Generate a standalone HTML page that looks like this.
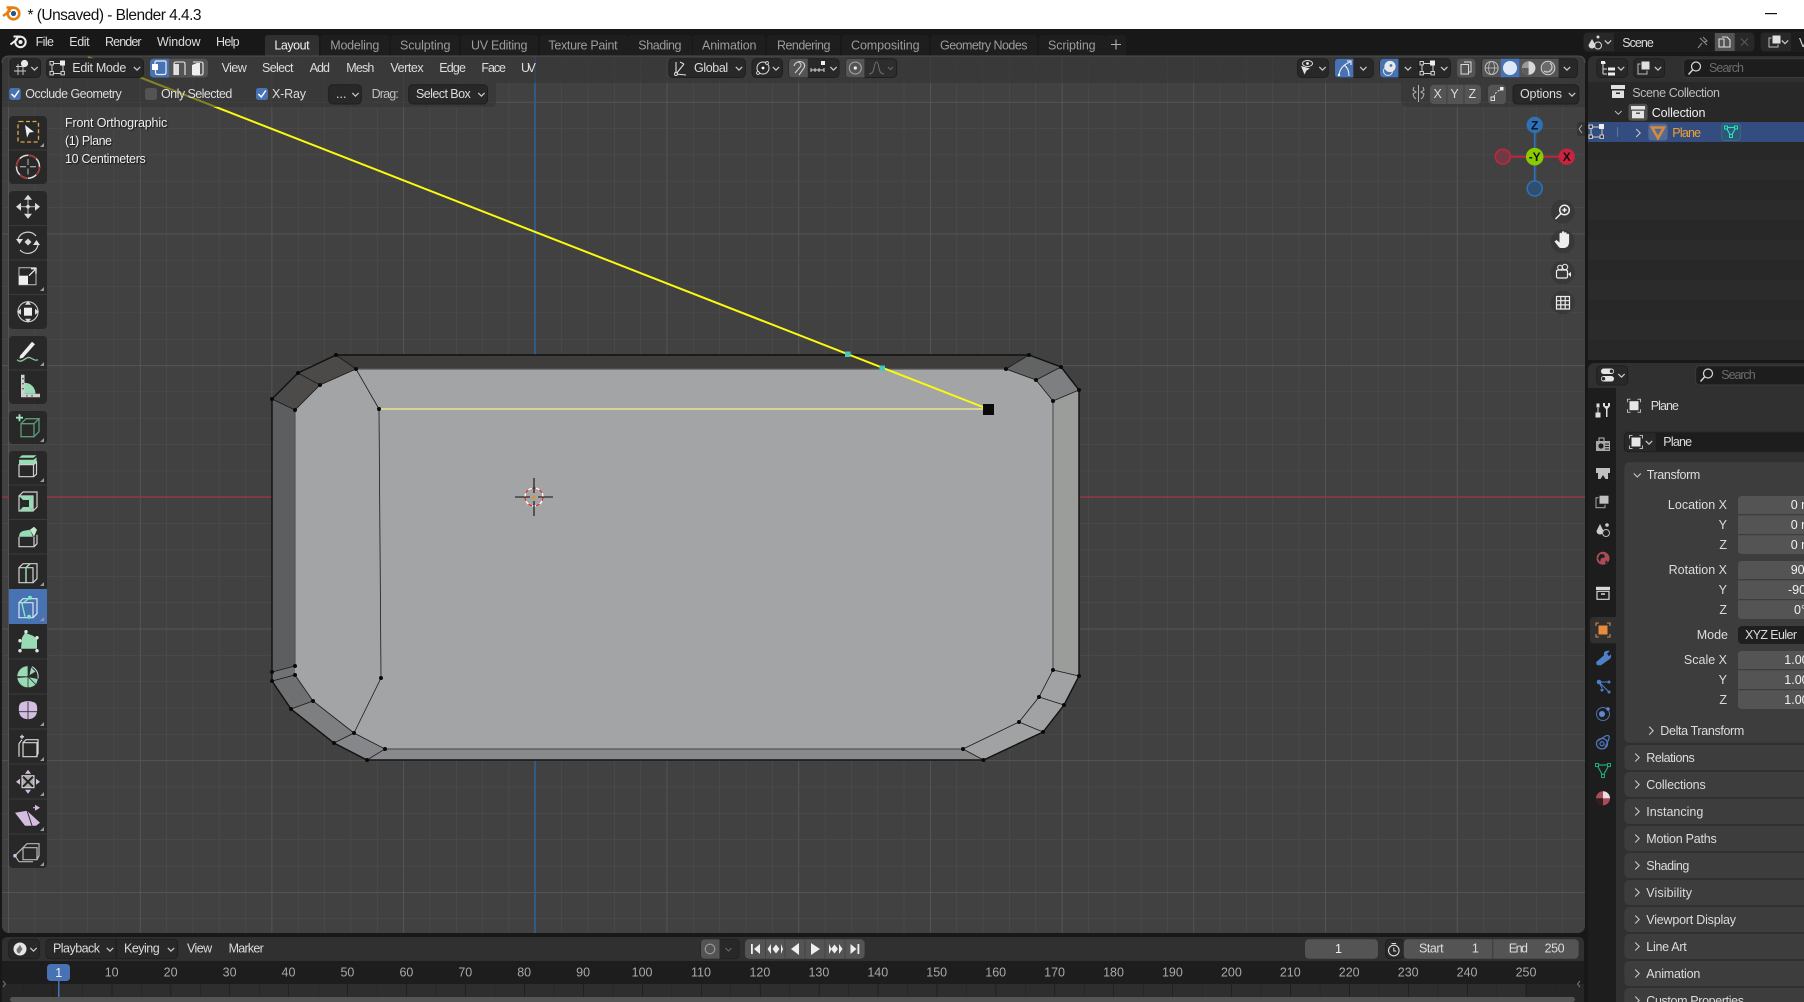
<!DOCTYPE html>
<html><head><meta charset="utf-8"><title>Blender 4.4.3</title>
<style>
html,body{margin:0;padding:0;background:#181818;width:1804px;height:1002px;overflow:hidden}
svg{display:block}
text{font-family:"Liberation Sans",sans-serif;font-size:12.5px;fill:#dcdcdc;white-space:pre}
.t{fill:#9c9c9c}.w{fill:#f0f0f0}.d{fill:#6c6c6c}
.b{fill:#282828;stroke:#1f1f1f}
.e{stroke:#1a1a1a;stroke-width:.8;fill:none}
.mint{fill:#98dbb4}.li{fill:#d3bde0}
</style></head><body>
<svg width="1804" height="1002" viewBox="0 0 1804 1002" xmlns="http://www.w3.org/2000/svg">
<defs>
<pattern id="g1" patternUnits="userSpaceOnUse" x="535" y="497" width="26.34" height="26.34"><path d="M0 0H26.34M0 0V26.34" stroke="#4e4e4e" stroke-width="1" fill="none"/></pattern>
<pattern id="g2" patternUnits="userSpaceOnUse" x="535" y="497" width="131.7" height="131.7"><path d="M0 0H131.7M0 0V131.7" stroke="#5c5c5c" stroke-width="1.2" fill="none"/></pattern>
<path id="cd" d="M-3.2 -1.6L0 1.6L3.2 -1.6" fill="none" stroke="#c8c8c8" stroke-width="1.2"/>
<path id="cr" d="M-1.8 -4L2.2 0L-1.8 4" fill="none" stroke="#c8c8c8" stroke-width="1.1"/>
<clipPath id="vp"><rect x="2" y="56" width="1583" height="877" rx="7"/></clipPath>
<g id="vm"><rect x="-6" y="-5" width="11" height="10" fill="none" stroke="#d0d0d0" stroke-width="1"/><rect x="2" y="-8" width="5" height="5" fill="#eee"/><rect x="-8" y="-7" width="3.4" height="3.4" fill="#282828" stroke="#d0d0d0"/><rect x="-8" y="3" width="3.4" height="3.4" fill="#282828" stroke="#d0d0d0"/><rect x="3" y="3" width="3.4" height="3.4" fill="#282828" stroke="#d0d0d0"/></g>
<path id="tri" d="M0 0L4 -4V0Z" fill="#9a9a9a"/>
</defs>

<!-- window -->
<rect width="1804" height="1002" fill="#181818"/>
<rect width="1804" height="29" fill="#fff"/>
<g transform="translate(11.5,13.5)">
<circle cx="2" cy="0" r="5.8" fill="none" stroke="#e87d0d" stroke-width="2.6"/><circle cx="2" cy="0" r="2.6" fill="#265787"/>
<path d="M-8.5 2.5L-1 -3M-5 -6H2" stroke="#e87d0d" stroke-width="2.4" fill="none"/></g>
<text x="27.5" y="20" textLength="174" style="font-size:15.5px;fill:#111">* (Unsaved) - Blender 4.4.3</text>
<rect x="1765" y="13" width="12" height="1.2" fill="#111"/>

<!-- topbar -->
<g transform="translate(18.5,42)">
<circle cx="2" cy="0" r="5.2" fill="none" stroke="#eee" stroke-width="2"/><circle cx="2" cy="0" r="2" fill="#eee"/>
<path d="M-8 2.5L-1 -3M-5 -5.5H2" stroke="#eee" stroke-width="2" fill="none"/></g>
<text x="35.6" y="46" textLength="18.4">File</text>
<text x="69.3" y="46" textLength="20.3">Edit</text>
<text x="105" y="46" textLength="36.6">Render</text>
<text x="157" y="46" textLength="43.5">Window</text>
<text x="216" y="46" textLength="23.6">Help</text>
<g fill="#1e1e1e">
<path d="M320.7 56V38q0-3 3-3h63q3 0 3 3v18zM391 56V38q0-3 3-3h62q3 0 3 3v18zM461 56V38q0-3 3-3h71q3 0 3 3v18zM540 56V38q0-3 3-3h82q3 0 3 3v18zM628 56V38q0-3 3-3h58q3 0 3 3v18zM693 56V38q0-3 3-3h66q3 0 3 3v18zM767 56V38q0-3 3-3h67q3 0 3 3v18zM842 56V38q0-3 3-3h81q3 0 3 3v18zM931 56V38q0-3 3-3h100q3 0 3 3v18zM1039 56V38q0-3 3-3h61q3 0 3 3v18zM1106 56V38q0-3 3-3h14q3 0 3 3v18z"/>
</g>
<path d="M265 56V38q0-3 3-3h48q3 0 3 3v18z" fill="#303030"/>
<text x="274.4" y="49.500" textLength="35.2" class="w">Layout</text>
<text x="330.3" y="49.500" textLength="49" class="t">Modeling</text>
<text x="400" y="49.500" textLength="50.4" class="t">Sculpting</text>
<text x="471" y="49.500" textLength="56.4" class="t">UV Editing</text>
<text x="548.4" y="49.500" textLength="69.2" class="t">Texture Paint</text>
<text x="638.3" y="49.500" textLength="43.2" class="t">Shading</text>
<text x="702" y="49.500" textLength="54.5" class="t">Animation</text>
<text x="777" y="49.500" textLength="53.4" class="t">Rendering</text>
<text x="851" y="49.500" textLength="68.6" class="t">Compositing</text>
<text x="940" y="49.500" textLength="87.5" class="t">Geometry Nodes</text>
<text x="1048" y="49.500" textLength="47.6" class="t">Scripting</text>
<path d="M1111 44.5h10M1116 39.5v10" stroke="#b0b0b0" stroke-width="1.1"/>
<!-- Scene selector -->
<rect x="1583.5" y="32.5" width="171" height="19" rx="4" fill="#282828" stroke="#1f1f1f"/>
<rect x="1614" y="33" width="100" height="18" fill="#1d1d1d"/>
<path d="M1592 39l-3.500 6a3.300 3.300 0 0 0 7 0z" fill="#d8d8d8"/><circle cx="1598" cy="37" r="1.5" fill="#ddd"/><circle cx="1598" cy="45.5" r="3.5" fill="none" stroke="#ddd"/>
<use href="#cd" x="1608" y="42"/>
<text x="1622.2" y="47" textLength="31.6">Scene</text>
<path d="M1698 48l4-5M1700 38l7 7M1703 37l4 4-3 1" fill="none" stroke="#8c8c8c" stroke-width="1.1"/>
<rect x="1715" y="33" width="19.7" height="18" fill="#545454"/>
<path d="M1722 37h5l3 3v7h-6v-2M1719 39h5v8h-5z" fill="none" stroke="#e0e0e0" stroke-width="1.1"/>
<path d="M1741 38.5l7 7M1748 38.5l-7 7" stroke="#5a5a5a" stroke-width="1.1"/>
<rect x="1760.5" y="32.5" width="60" height="19" rx="4" fill="#282828" stroke="#1f1f1f"/>
<rect x="1791" y="33" width="20" height="18" fill="#1d1d1d"/>
<rect x="1769" y="38" width="9" height="9" fill="none" stroke="#bbb"/><rect x="1772" y="35" width="9" height="9" fill="#e0e0e0" stroke="#282828"/>
<use href="#cd" x="1785" y="42"/>
<text x="1799" y="47">V</text>

<!-- viewport -->
<g clip-path="url(#vp)">
<rect x="2" y="56" width="1583" height="877" fill="#414141"/>
<rect x="2" y="56" width="1583" height="877" fill="url(#g1)"/>
<rect x="2" y="56" width="1583" height="877" fill="url(#g2)"/>
<path d="M2 497H1585" stroke="#933543" stroke-width="1.6"/>
<path d="M535 56V933" stroke="#2e5f96" stroke-width="1.6"/>

<!-- mesh faces -->
<polygon points="295,410 320,385 356,369 1006,369 1036,380 1053,401 1053,670 1039,697 1019,722 963,749 385,749 354,733 313,701 295,675 295,666" fill="#a3a4a6"/>
<polygon points="272,399 295,410 295,666 272,672" fill="#5d5e60"/>
<polygon points="336,355 1029,355 1006,369 356,369" fill="#3e3d3b"/>
<polygon points="272,399 298,373 320,385 295,410" fill="#4c4b49"/>
<polygon points="298,373 336,355 356,369 320,385" fill="#4b4a48"/>
<polygon points="1029,355 1061,367 1036,380 1006,369" fill="#626464"/>
<polygon points="1061,367 1079,390 1053,401 1036,380" fill="#7d7f80"/>
<polygon points="1079,390 1079,676 1053,670 1053,401" fill="#9b9d9b"/>
<polygon points="1079,676 1064,705 1039,697 1053,670" fill="#a1a2a3"/>
<polygon points="1064,705 1043,732 1019,722 1039,697" fill="#a1a2a3"/>
<polygon points="1043,732 983.5,760 963,749 1019,722" fill="#a1a2a3"/>
<polygon points="983.5,760 367,760 385,749 963,749" fill="#888a8c"/>
<polygon points="272,672 272,681 295,675 295,666" fill="#707274"/>
<polygon points="272,681 291,709 313,701 295,675" fill="#6f7072"/>
<polygon points="291,709 334,743 354,733 313,701" fill="#7e7f81"/>
<polygon points="334,743 367,760 385,749 354,733" fill="#86878a"/>
<!-- edges -->
<path d="M356 369H1006M385 749H963M295 410V666M1053 401V670" stroke="#555" stroke-width="1.2" fill="none"/>
<path class="e" d="M272 399L295 410L320 385L356 369L379 409M298 373L320 385M336 355L356 369M1029 355L1006 369L1036 380L1053 401M1061 367L1036 380M1079 390L1053 401M1079 676L1053 670L1039 697L1019 722L963 749M1064 705L1039 697M1043 732L1019 722M983.5 760L963 749M272 672L295 666M272 681L295 675L313 701L354 733L385 749M291 709L313 701M334 743L354 733M367 760L385 749M379 409L381 678L354 733"/>
<path d="M272 399L298 373L336 355H1029L1061 367L1079 390V676L1064 705L1043 732L983.5 760H367L334 743L291 709L272 681V399Z" fill="none" stroke="#111" stroke-width="1.4"/>
<path d="M379 409H988" stroke="#f4f490" stroke-width="1.3"/>
<path d="M88 57L988 409" stroke="#fafa10" stroke-width="2"/>
<g fill="#0a0a0a">
<circle cx="272" cy="399" r="2"/><circle cx="298" cy="373" r="2"/><circle cx="336" cy="355" r="2"/><circle cx="295" cy="410" r="2"/><circle cx="320" cy="385" r="2"/><circle cx="356" cy="369" r="2"/><circle cx="1029" cy="355" r="2"/><circle cx="1061" cy="367" r="2"/><circle cx="1079" cy="390" r="2"/><circle cx="1006" cy="369" r="2"/><circle cx="1036" cy="380" r="2"/><circle cx="1053" cy="401" r="2"/><circle cx="1053" cy="670" r="2"/><circle cx="1079" cy="676" r="2"/><circle cx="1039" cy="697" r="2"/><circle cx="1064" cy="705" r="2"/><circle cx="1019" cy="722" r="2"/><circle cx="1043" cy="732" r="2"/><circle cx="963" cy="749" r="2"/><circle cx="983.5" cy="760" r="2"/><circle cx="272" cy="672" r="2"/><circle cx="272" cy="681" r="2"/><circle cx="295" cy="666" r="2"/><circle cx="295" cy="675" r="2"/><circle cx="313" cy="701" r="2"/><circle cx="291" cy="709" r="2"/><circle cx="354" cy="733" r="2"/><circle cx="334" cy="743" r="2"/><circle cx="385" cy="749" r="2"/><circle cx="367" cy="760" r="2"/><circle cx="381" cy="678" r="2"/><circle cx="379" cy="409" r="2"/>
<rect x="983" y="404" width="11" height="11"/>
</g>
<rect x="845" y="351.500" width="5.500" height="5.500" fill="#46c8c0"/>
<rect x="879.500" y="365.500" width="5.500" height="5.500" fill="#46c8c0"/>
<!-- 3D cursor -->
<g transform="translate(534,497)" fill="none">
<circle r="9" stroke="#fff" stroke-width="1.3"/>
<circle r="9" stroke="#d03030" stroke-width="1.3" stroke-dasharray="4 4"/>
<path d="M-19 0H-4M4 0H19M0 -19V-4M0 4V19" stroke="#111" stroke-width="1.1"/>
<circle r="1.8" fill="#e8902c"/>
</g>

<!-- header overlays -->
<rect x="2" y="56" width="1583" height="27" fill="#343434" fill-opacity=".6"/>
<path d="M2 83H496V101q0 6-6 6H2z" fill="#343434" fill-opacity=".6"/>
<path d="M1401 83H1585V107H1407q-6 0-6-6z" fill="#343434" fill-opacity=".6"/>
</g>
<path d="M2 63q0-7 7-7H1578q7 0 7 7" fill="none" stroke="#4e4e4e" stroke-width="1"/>

<!-- header left -->
<rect class="b" x="10" y="58.7" width="30.5" height="18.8" rx="4"/>
<path d="M14 71h12M16 66.5h8M18 64v11M23 64v11" stroke="#ccc" stroke-width=".9"/><circle cx="24.5" cy="63.5" r="3.6" fill="#e8e8e8"/>
<use href="#cd" x="34.5" y="68.5"/>
<rect class="b" x="46.7" y="58.7" width="96.8" height="18.8" rx="4"/>
<use href="#vm" x="58" y="68.5"/>
<text x="72.3" y="72" textLength="54">Edit Mode</text>
<use href="#cd" x="137" y="68.5"/>
<rect x="150" y="58.7" width="58" height="18.8" rx="4" fill="#545454"/>
<path d="M154 58.7h14.8v18.8H154q-4 0-4-4V62.7q0-4 4-4z" fill="#4772b3"/>
<path d="M155 65v-2.5q0-1.5 1.5-1.5h8q1.5 0 1.500 1.500v10q0 2-2 2h-6.500q-2 0-2-2v-3" fill="none" stroke="#eee" stroke-width="1.2"/><rect x="152" y="64" width="6" height="6" fill="#fff"/>
<path d="M174 75v-11q0-2 2-2h7q2 0 2 2v11" fill="none" stroke="#eee" stroke-width="1.1"/><rect x="174" y="64" width="5" height="11" fill="#eee" fill-opacity=".9"/>
<path d="M193 62h8q2 0 2 2v9q0 2-2 2h-8" fill="none" stroke="#eee" stroke-width="1.1"/><path d="M192 65l5-2h3v12h-8z" fill="#f0f0f0"/>
<text x="221.6" y="72" textLength="25.2">View</text>
<text x="262" y="72" textLength="31.5">Select</text>
<text x="309.6" y="72" textLength="20.4">Add</text>
<text x="346.3" y="72" textLength="28">Mesh</text>
<text x="390.4" y="72" textLength="33.2">Vertex</text>
<text x="439.3" y="72" textLength="26.7">Edge</text>
<text x="481.4" y="72" textLength="24.6">Face</text>
<text x="521" y="72" textLength="14.8">UV</text>

<!-- header center -->
<rect class="b" x="668.9" y="58.7" width="76.5" height="18.800" rx="4"/>
<path d="M676 74V62M676 74L686 75M676 74L684 64M680 62L684 64" fill="none" stroke="#ddd" stroke-width="1.1"/><circle cx="676" cy="74" r="1.5" fill="#282828" stroke="#ddd"/>
<text x="694" y="72" textLength="34.2">Global</text>
<use href="#cd" x="739" y="68.5"/>
<rect class="b" x="752" y="58.7" width="30.5" height="18.8" rx="4"/>
<circle cx="763" cy="68" r="6" fill="none" stroke="#ddd" stroke-width="1"/><circle cx="763" cy="68" r="1.4" fill="#fff"/>
<circle cx="767" cy="63" r="1.4" fill="#282828" stroke="#ddd" stroke-width=".9"/><circle cx="758" cy="73" r="1.4" fill="#282828" stroke="#ddd" stroke-width=".9"/>
<use href="#cd" x="776" y="68.5"/>
<rect class="b" x="789" y="58.7" width="50" height="18.8" rx="4"/>
<path d="M793 58.7h14.8v18.8H793q-4 0-4-4V62.7q0-4 4-4z" fill="#545454"/>
<path d="M795 73l6-7a3.5 3.5 0 0 0 -3 -4M794 66a6 6 0 0 1 8 -4q4 2 2 6l-5 7" fill="none" stroke="#cfcfcf" stroke-width="1.1"/>
<path d="M811 70h13M811 68v4M815 68v4M819 68v4M824 68v4" stroke="#ddd" fill="none" stroke-width=".9"/><rect x="821" y="61" width="4" height="4" fill="#eee"/>
<use href="#cd" x="833.5" y="68.5"/>
<rect class="b" x="845.7" y="58.7" width="51" height="18.8" rx="4" fill-opacity=".7"/>
<path d="M849.7 58.7h14.7v18.8H849.7q-4 0-4-4V62.7q0-4 4-4z" fill="#545454"/>
<circle cx="855.3" cy="68" r="6" fill="none" stroke="#aaa"/><circle cx="855.3" cy="68" r="1.6" fill="#eee"/>
<path d="M869 74q4 0 5-6t2.5-6 2.5 6 5 6" fill="none" stroke="#6a6a6a" stroke-width="1.1"/>
<path d="M888 67l2.5 2.5L893 67" fill="none" stroke="#6a6a6a"/>

<!-- header right -->
<rect class="b" x="1297.5" y="58.7" width="30.8" height="18.8" rx="4"/>
<path d="M1301 66l9 2.5-3.5 2-2 4z" fill="#e0e0e0"/><ellipse cx="1307.5" cy="63.5" rx="5" ry="3" fill="none" stroke="#ddd"/><circle cx="1307.5" cy="63.5" r="1.4" fill="#eee"/>
<use href="#cd" x="1322.5" y="68.5"/>
<rect class="b" x="1334.8" y="58.7" width="38.5" height="18.8" rx="4"/>
<path d="M1338.8 58.7h14.5v18.8h-14.5q-4 0-4-4V62.7q0-4 4-4z" fill="#4772b3"/>
<path d="M1339 75q1-9 11-13M1349 76q0-8-5-11" fill="none" stroke="#eee" stroke-width="1.1"/><circle cx="1339" cy="75" r="1.2" fill="#fff"/><path d="M1347 61h4v4" stroke="#fff" fill="none"/>
<use href="#cd" x="1363.3" y="68.5"/>
<rect class="b" x="1380" y="58.7" width="70.4" height="18.8" rx="4"/>
<path d="M1384 58.7h14.4v18.8H1384q-4 0-4-4V62.7q0-4 4-4z" fill="#4772b3"/>
<circle cx="1390" cy="66.5" r="5.6" fill="#e8e8e8"/><circle cx="1388" cy="71" r="4.5" fill="none" stroke="#e8e8e8"/><circle cx="1391" cy="65.5" r="1.4" fill="#4772b3"/>
<use href="#cd" x="1408" y="68.5"/>
<path d="M1418.8 59v18" stroke="#1c1c1c"/>
<g transform="translate(1428,68.5)"><use href="#vm"/></g>
<use href="#cd" x="1444.2" y="68.5"/>
<rect x="1457" y="58.7" width="18.4" height="18.8" rx="4" fill="#545454"/>
<path d="M1464 62h7v10h-2M1461 64.5h7.5v9.5H1461z" fill="none" stroke="#dcdcdc"/><path d="M1463 71h0M1466 68h0" stroke="#ddd" stroke-width="1.5"/>
<rect class="b" x="1482" y="58.7" width="95.5" height="18.8" rx="4"/>
<path d="M1486 58.7h72.6v18.8H1486q-4 0-4-4V62.7q0-4 4-4z" fill="#545454"/>
<rect x="1500.8" y="58.7" width="18.5" height="18.8" fill="#4772b3"/>
<circle cx="1491.6" cy="68" r="6.5" fill="none" stroke="#c0c0c0"/><ellipse cx="1491.6" cy="68" rx="3" ry="6.5" fill="none" stroke="#c0c0c0" stroke-width=".8"/><path d="M1485 68h13" stroke="#c0c0c0" stroke-width=".8"/>
<circle cx="1510" cy="68" r="7" fill="#dfe8f6"/>
<circle cx="1528.6" cy="68" r="6.8" fill="#9a9a9a"/><path d="M1528.6 61.2a6.8 6.8 0 0 1 0 13.6 6.8 6.8 0 0 1 -6.8 -6.8h6.8z" fill="#d8d8d8"/><path d="M1528.6 68V74.8A6.8 6.8 0 0 1 1521.8 68z" fill="#5c5c5c"/>
<circle cx="1548" cy="68" r="6.8" fill="#6a6a6a" stroke="#d0d0d0"/><path d="M1544 71a5 5 0 0 0 6-8" fill="none" stroke="#ccc" stroke-width="1.2"/>
<use href="#cd" x="1567" y="68.5"/>

<!-- tool settings left -->
<rect x="9.2" y="88" width="11.5" height="12" rx="2.5" fill="#4772b3"/>
<path d="M11.5 94l3 3 4.5-6.5" fill="none" stroke="#fff" stroke-width="1.5"/>
<text x="25.3" y="98" textLength="96.4">Occlude Geometry</text>
<rect x="145" y="88" width="12" height="12" rx="2.5" fill="#545454"/>
<text x="161" y="98" textLength="71.3">Only Selected</text>
<rect x="256" y="88" width="12" height="12" rx="2.5" fill="#4772b3"/>
<path d="M258.3 94l3 3 4.5-6.5" fill="none" stroke="#fff" stroke-width="1.5"/>
<text x="272" y="98" textLength="34">X-Ray</text>
<rect class="b" x="328.7" y="84.7" width="32.6" height="19.3" rx="4"/>
<text x="336" y="98">...</text><use href="#cd" x="355.5" y="94.5"/>
<text x="371.6" y="98" textLength="27.2" style="fill:#c0c0c0">Drag:</text>
<rect class="b" x="408.7" y="84.7" width="78.8" height="19.3" rx="4"/>
<text x="416" y="98" textLength="54.7">Select Box</text><use href="#cd" x="481.4" y="94.5"/>

<!-- tool settings right -->
<path d="M1414 87l-1 3 3 2-3 2 1 3 2 2M1423 87l1 3-3 2 3 2-1 3-2 2M1418.5 85v17" fill="none" stroke="#b4b4b4" stroke-width="1"/>
<rect x="1430" y="84.7" width="51" height="19.3" rx="4" fill="#545454"/>
<path d="M1447 85v19M1464 85v19" stroke="#3f3f3f"/>
<text x="1437.7" y="98" text-anchor="middle">X</text><text x="1454.6" y="98" text-anchor="middle">Y</text><text x="1472.3" y="98" text-anchor="middle">Z</text>
<rect x="1488" y="84.7" width="18" height="19.3" rx="4" fill="#545454"/>
<rect x="1500" y="87" width="3.5" height="3.5" fill="#eee"/><rect x="1491" y="97" width="3.5" height="3.5" fill="none" stroke="#ddd"/><path d="M1494 97q1-5 6-7" fill="none" stroke="#ddd" stroke-dasharray="2 1.5"/>
<rect class="b" x="1513" y="84.7" width="65.7" height="19.3" rx="4"/>
<text x="1520" y="98" textLength="42">Options</text><use href="#cd" x="1572" y="94.5"/>

<!-- overlay text -->
<g style="filter:drop-shadow(1px 1px 0.5px #111)">
<text x="65" y="127" textLength="102.2" class="w">Front Orthographic</text>
<text x="65" y="145" textLength="47" class="w">(1) Plane</text>
<text x="65" y="163" textLength="80.8" class="w">10 Centimeters</text>
</g>

<!-- nav gizmo -->
<path d="M1502.8 156.7H1566.7" stroke="#c8233f" stroke-width="1.8"/>
<path d="M1534.7 125V188" stroke="#2c72b8" stroke-width="1.8"/>
<circle cx="1502.8" cy="156.7" r="7.5" fill="#6f3a44" stroke="#c8233f" stroke-width="1.5"/>
<circle cx="1566.7" cy="156.7" r="8.2" fill="#c8233f"/>
<circle cx="1534.7" cy="125" r="8.2" fill="#2c72b8"/>
<circle cx="1534.7" cy="188.5" r="7.5" fill="#304e70" stroke="#2c72b8" stroke-width="1.5"/>
<circle cx="1534.7" cy="156.7" r="8.8" fill="#8acb00"/>
<text x="1566.7" y="161" text-anchor="middle" style="font-size:12px;fill:#111;font-weight:bold">X</text>
<text x="1534.7" y="129.5" text-anchor="middle" style="font-size:12px;fill:#111;font-weight:bold">Z</text>
<text x="1534.7" y="161" text-anchor="middle" style="font-size:12px;fill:#111;font-weight:bold">-Y</text>
<circle cx="1562.8" cy="211.6" r="12" fill="#343434" fill-opacity=".65"/>
<circle cx="1562.8" cy="241.5" r="12" fill="#343434" fill-opacity=".65"/>
<circle cx="1562.8" cy="272.5" r="12" fill="#343434" fill-opacity=".65"/>
<circle cx="1562.8" cy="302.5" r="12" fill="#343434" fill-opacity=".65"/>
<circle cx="1564.5" cy="210" r="4.8" fill="none" stroke="#eee" stroke-width="1.5"/><path d="M1561 213.5l-5.5 5.5M1562.3 210h4.4M1564.5 207.8v4.4" stroke="#eee" stroke-width="1.5"/>
<path d="M1554.500 241.500l2-1.500 3 2.500V234a1.200 1.200 0 0 1 2.400 0v-1.500a1.200 1.200 0 0 1 2.400 0v1a1.200 1.200 0 0 1 2.400 0v1.500a1.200 1.200 0 0 1 2.400 0v6.500q0 6-5 6.500h-3q-2 0-3-2z" fill="#eee"/>
<rect x="1556.5" y="270" width="11" height="8" rx="1.5" fill="none" stroke="#eee" stroke-width="1.2"/><circle cx="1560" cy="267.5" r="2.3" fill="none" stroke="#eee"/><circle cx="1565" cy="267" r="2.7" fill="none" stroke="#eee"/><path d="M1568 274l3-2v5z" fill="#eee"/>
<path d="M1556.5 296.5h13v12.5h-13zM1556.5 300.7h13M1556.5 304.9h13M1560.8 296.5V309M1565.2 296.5V309" fill="none" stroke="#eee" stroke-width="1.2"/>
<path d="M1585 122h-5q-3 0-3 3v8q0 3 3 3h5z" fill="#343434"/>
<path d="M1582 125l-3 4 3 4" fill="none" stroke="#aaa"/>

<!-- toolbar -->
<g fill="#282828">
<rect x="9" y="116" width="38" height="68" rx="4"/>
<rect x="9" y="191" width="38" height="138" rx="4"/>
<rect x="9" y="336" width="38" height="68" rx="4"/>
<rect x="9" y="411" width="38" height="33" rx="4"/>
<rect x="9" y="451" width="38" height="417" rx="4"/>
</g>
<path d="M9 150h38M9 225.5h38M9 260h38M9 294.5h38M9 370h38M9 485h38M9 519.5h38M9 554h38M9 659h38M9 694h38M9 729h38M9 764h38M9 799h38M9 834h38" stroke="#3a3a3a"/>
<rect x="9" y="589" width="38" height="35" fill="#4772b3"/>
<g>
<use href="#tri" x="40" y="147"/><use href="#tri" x="40" y="291"/><use href="#tri" x="40" y="366"/><use href="#tri" x="40" y="442"/><use href="#tri" x="40" y="482"/><use href="#tri" x="40" y="586"/><use href="#tri" x="40" y="621"/><use href="#tri" x="40" y="726"/><use href="#tri" x="40" y="761"/><use href="#tri" x="40" y="796"/><use href="#tri" x="40" y="831"/><use href="#tri" x="40" y="866"/>
</g>
<!-- select box -->
<rect x="18" y="121.5" width="20.5" height="20.5" rx="1.5" fill="none" stroke="#e0a84a" stroke-width="1.3" stroke-dasharray="4 2.5"/>
<path d="M25 125l9 7-4.5.5-2.500 5z" fill="#eee"/>
<!-- cursor -->
<circle cx="28" cy="166.7" r="11.5" fill="none" stroke="#ddd" stroke-width="1.5"/>
<circle cx="28" cy="166.7" r="11.5" fill="none" stroke="#a83232" stroke-width="1.5" stroke-dasharray="9 9"/>
<path d="M20 166.7h6M30 166.7h6M28 159v6M28 168.5v6" stroke="#9a9a9a" stroke-width="1.3"/>
<!-- move -->
<g fill="#dcdcdc" transform="translate(28,206.7)"><path d="M0 -12l4 5h-8zM0 12l4 -5h-8zM-12 0l5 -4v8zM12 0l-5 -4v8z"/><path d="M0 -7v14M-7 0h14" stroke="#aaa" stroke-width="1.2"/><circle r="1.8"/></g>
<!-- rotate -->
<g transform="translate(28,242)"><path d="M-10 -3a10.5 10.5 0 0 1 18 -3M10 3a10.5 10.5 0 0 1 -18 5" fill="none" stroke="#d0d0d0" stroke-width="1.2"/><path d="M-12 -3h7l-3.5 5zM12 3h-7l3.5 -5z" fill="#e0e0e0"/><path d="M0 -3.5L3.5 0L0 3.5L-3.5 0z" fill="#d8d8d8"/></g>
<!-- scale -->
<g transform="translate(28,276.7)"><rect x="-9" y="-9" width="17" height="17" fill="none" stroke="#b0b0b0" stroke-width="1.1"/><rect x="-9" y="-1" width="9" height="9" fill="#f0f0f0"/><path d="M1 -1L7 -7M3 -8h5v5" fill="none" stroke="#e8e8e8" stroke-width="1.3"/></g>
<!-- transform -->
<g transform="translate(28,311.7)"><circle r="10" fill="none" stroke="#c8c8c8" stroke-width="1.2"/><rect x="-4" y="-4" width="8" height="8" fill="#eee"/><path d="M0 -11l3 4h-6zM0 11l3 -4h-6zM-11 0l4 -3v6zM11 0l-4 -3v6z" fill="#dcdcdc"/></g>
<!-- annotate -->
<g transform="translate(28,351.7)"><path d="M-8 4L4 -10l3 2.5L-5 6l-3.5 1z" fill="#eee"/><path d="M-11 8q3 3 7 0t6 -2 4 2 4 0" fill="none" stroke="#89c8a0" stroke-width="1.3"/></g>
<!-- measure -->
<g transform="translate(28,386.7)"><path d="M-7 -12h3.5V7H12v3.5H-7z" fill="#d0d0d0"/><path d="M-3.5 -4a11 11 0 0 1 11 11h-11z" class="mint"/><path d="M-6 -8h2M-6 -3h2M-6 2h2M-1 8v2M4 8v2" stroke="#444"/></g>
<!-- add cube -->
<g transform="translate(28,426.7)"><path d="M-7 -3h13v13h-13zM-7 -3l5 -5h13l-5 5M11 -8v13l-5 5" fill="none" stroke="#5e9a78" stroke-width="1.3"/><path d="M-12 -9h7M-8.5 -12.5v7" stroke="#a4e4bc" stroke-width="1.8"/></g>
<!-- extrude -->
<g transform="translate(28,466.7)"><path d="M-9 -9l3 -2.5h14.5l-3 2.5zM-9 -7h14.5v5H-9zM5.5 -7l3 -2.5v5l-3 2.5z" class="mint"/><path d="M-9 -2h14.5v12H-9zM5.5 -2l3 -2.5v12l-3 2.5" fill="none" stroke="#d0d0d0" stroke-width="1.2"/></g>
<!-- inset -->
<g transform="translate(28,502)"><path d="M-9 -6h14v15h-14zM-9 -6l4 -4h14v15l-4 4" fill="none" stroke="#d0d0d0" stroke-width="1.2"/><path d="M-9 -6h14l-4 4v7l4 4h-14l4 -4v-7z" class="mint"/><path d="M5 -6l-4 4v7l4 4z" class="mint"/><rect x="-5" y="-2" width="6" height="7" fill="#282828"/></g>
<!-- bevel -->
<g transform="translate(28,536.7)"><path d="M-9 0V10H6V0M6 10l3 -3V-2" fill="none" stroke="#d0d0d0" stroke-width="1.2"/><path d="M-9 0q0-5 5-6l6-1 3 7H-9z" class="mint"/><path d="M2 -7l4-3 3 3-3 7z" fill="#c4e8d2"/></g>
<!-- loop cut -->
<g transform="translate(28,571.7)"><path d="M-9 -4h14v15h-14zM-9 -4l4 -4h14v15l-4 4" fill="none" stroke="#d0d0d0" stroke-width="1.2"/><path d="M-2 11V-4l4-4" fill="none" stroke="#a4e4bc" stroke-width="1.4"/></g>
<!-- knife -->
<g transform="translate(28,606.7)"><path d="M-9 -4h14v15h-14zM-9 -4l4 -4h14v15l-4 4M-9 -4l4 -4" fill="none" stroke="#d8e4ef" stroke-width="1.2"/><path d="M2 -9l-8 6 3 13" fill="none" stroke="#7fe8c0" stroke-width="1.4"/><circle cx="2" cy="-9" r="2" fill="#7fe8c0"/><circle cx="1" cy="10" r="2" fill="#7fe8c0"/></g>
<!-- poly build -->
<g transform="translate(28,641.7)"><path d="M-7 7L-6 -4L-3 -9L5 -6L9 -3L9 7z" class="mint"/><g fill="#e4e4e4"><circle cx="-8" cy="-1" r="1.7"/><circle cx="-8" cy="9" r="1.7"/><circle cx="-2" cy="-10" r="1.7"/><circle cx="9" cy="-4" r="1.7"/><circle cx="9" cy="9" r="1.7"/></g></g>
<!-- spin -->
<g transform="translate(28,676.7)"><path d="M0 0V-11A11 11 0 0 0 -11 1zM0 0H-11A11 11 0 0 0 0 11zM0 0V11A11 11 0 0 0 8 8zM0 0L8 8A11 11 0 0 0 10 2z" class="mint" stroke="#333" stroke-width=".8"/><path d="M1 -1L3 -10L8 -5z" class="mint" stroke="#333" stroke-width=".8"/><path d="M4 -10q7 4 6 12" stroke="#ddd" fill="none"/></g>
<!-- smooth -->
<g transform="translate(28,710.7)"><path d="M-9 1q-1-8 3-9.500q6-2.500 12 0q4 1.500 3 9.500q-1 7-9 7.500q-8-.5-9-7.500z" class="li"/><path d="M-9 1h18M0 -9v18" stroke="#333" stroke-width=".9"/></g>
<!-- edge slide -->
<g transform="translate(28,746.7)"><path d="M-5 -4h14v14h-14zM-5 -4l3 -3h12v14l-2 3M-9 10V-3l3 -4" fill="none" stroke="#d8d8d8" stroke-width="1.2"/><path d="M-8 -10h4M-6 -12v4" stroke="#d3bde0" stroke-width="1.5"/></g>
<!-- shrink -->
<g transform="translate(28,781.7)"><rect x="-6" y="-6" width="12" height="12" fill="#aaa" stroke="#ddd"/><path d="M-5 -5l10 10M5 -5l-10 10" stroke="#222" stroke-width="2"/><path d="M0 -12l3 4h-6zM0 12l3 -4h-6zM-12 0l4 -3v6zM12 0l-4 -3v6z" class="li"/></g>
<!-- shear -->
<g transform="translate(28,816.7)"><path d="M-13 -4l12 -2 13 12 -4 3H-3z" class="li"/><path d="M-1 -6L4 9" stroke="#333"/><path d="M7 -12l5 3 -5 3z" class="li"/><path d="M5 -9h6" stroke="#d3bde0"/></g>
<!-- rip -->
<g transform="translate(28,851.7)"><path d="M-5 -4h14v12h-14zM-5 -4l4 -4h12v12l-2 4M-9 10h14M-13 4l4 6M-13 4l8-8" fill="none" stroke="#b8b8b8" stroke-width="1.2"/><circle cx="-13" cy="4" r="1.8" fill="#d3bde0"/></g>

<!-- outliner -->
<path d="M1588 63q0-7 7-7H1804V360H1588z" fill="#282828"/>
<path d="M1588 63q0-7 7-7H1804V82H1588z" fill="#303030"/>
<rect x="1588" y="160" width="216" height="20" fill="#2b2b2b"/>
<rect x="1588" y="200" width="216" height="20" fill="#2b2b2b"/>
<rect x="1588" y="240" width="216" height="20" fill="#2b2b2b"/>
<rect x="1588" y="280" width="216" height="20" fill="#2b2b2b"/>
<rect x="1588" y="320" width="216" height="20" fill="#2b2b2b"/>
<rect class="b" x="1596.8" y="58.7" width="30.8" height="18.8" rx="4"/>
<path d="M1601 63h5M1603 63V74M1603 69h4M1603 74h4" stroke="#ddd" fill="none"/><rect x="1601" y="61" width="4" height="3" fill="#eee"/><rect x="1608" y="67.5" width="7" height="3" fill="#eee"/><rect x="1608" y="72.5" width="7" height="3" fill="#eee"/>
<use href="#cd" x="1621" y="68.5"/>
<rect class="b" x="1633.8" y="58.7" width="30.8" height="18.8" rx="4"/>
<rect x="1638" y="64" width="9" height="10" fill="none" stroke="#bbb"/><rect x="1641" y="61" width="9" height="9" fill="#e0e0e0" stroke="#282828"/>
<use href="#cd" x="1658" y="68.5"/>
<rect class="b" x="1683.4" y="58.7" width="130" height="18.8" rx="4" style="fill:#1d1d1d;stroke:#3a3a3a"/>
<circle cx="1696" cy="66.5" r="4.5" fill="none" stroke="#d8d8d8" stroke-width="1.2"/><path d="M1692.5 70l-4 4.5" stroke="#d8d8d8" stroke-width="1.4"/>
<text x="1709" y="72" textLength="35" class="d">Search</text>
<rect x="1611" y="85" width="14" height="4" fill="#e0e0e0"/><path d="M1612 90.5h12V98h-12z" fill="#e0e0e0"/><rect x="1616" y="92.5" width="4" height="1.5" fill="#282828"/>
<text x="1632.2" y="97" textLength="87.8" style="fill:#bcbcbc">Scene Collection</text>
<path d="M1615 111l3.3 3.3 3.3-3.3" fill="none" stroke="#bbb"/>
<rect x="1628.4" y="103.7" width="19.2" height="17" rx="3" fill="#505050"/>
<rect x="1631" y="106" width="14" height="3.5" fill="#e4e4e4"/><path d="M1632 110.8h12v7.5h-12z" fill="#e4e4e4"/><rect x="1636" y="112.5" width="4" height="1.5" fill="#505050"/>
<text x="1651.8" y="117" textLength="53.6" class="w">Collection</text>
<rect x="1588" y="122" width="216" height="20" fill="#334d80"/>
<use href="#vm" x="1597" y="132"/>
<path d="M1617.6 127v10" stroke="#6a7a9a"/>
<use href="#cr" x="1638" y="133"/>
<rect x="1648.4" y="123.5" width="19.2" height="17" rx="3" fill="#536a94"/>
<path d="M1652 127.5h12L1658 138z" fill="none" stroke="#d88a3c" stroke-width="2.6"/>
<text x="1672.3" y="137" textLength="28.8" style="fill:#f0a030">Plane</text>
<rect x="1721.6" y="123.5" width="18.8" height="17" rx="3" fill="#2e5878" stroke="#3a6a80"/>
<path d="M1726 127.5h10L1731 136z" fill="none" stroke="#2ce0c0" stroke-width="1.2"/><rect x="1724.5" y="126" width="3" height="3" fill="#2e5878" stroke="#2ce0c0"/><rect x="1734.5" y="126" width="3" height="3" fill="#2e5878" stroke="#2ce0c0"/><rect x="1729.5" y="134.5" width="3" height="3" fill="#2e5878" stroke="#2ce0c0"/>

<!-- properties -->
<path d="M1588 370q0-7 7-7H1804V1002H1588z" fill="#303030"/>
<rect x="1588" y="388" width="28" height="614" fill="#1d1d1d"/>
<rect class="b" x="1596.7" y="365.7" width="31" height="19.3" rx="4"/>
<rect x="1601" y="368.5" width="13" height="5.5" rx="2.7" fill="#e4e4e4"/><rect x="1601" y="376" width="13" height="5.5" rx="2.7" fill="#e4e4e4"/>
<circle cx="1611.5" cy="371.2" r="1.7" fill="#282828"/><circle cx="1603.5" cy="378.7" r="1.7" fill="#282828"/>
<use href="#cd" x="1621.5" y="375.5"/>
<rect class="b" x="1695.7" y="365.7" width="120" height="19.3" rx="4" style="fill:#1d1d1d;stroke:#3a3a3a"/>
<circle cx="1708" cy="373.5" r="4.5" fill="none" stroke="#d8d8d8" stroke-width="1.2"/><path d="M1704.5 377l-4 4.5" stroke="#d8d8d8" stroke-width="1.4"/>
<text x="1721.3" y="379" textLength="34.4" class="d">Search</text>
<!-- prop tabs -->
<g transform="translate(1603,410)"><path d="M-7 7v-4h4v4zM-5 3v-5M-6 -6h2v3h-2z" fill="#ddd" stroke="#ddd"/><path d="M3 7V-1L0 -4V-7L2 -7V-4H5V-7L7 -7V-4L4.5 -1V7z" fill="#ddd"/></g>
<g transform="translate(1603,445)"><path d="M-7 -4h14v10h-14z" fill="#a8a8a8"/><path d="M-4 -4v-3h5v3" fill="none" stroke="#bbb"/><circle cx="-2" cy="1" r="2.6" fill="#1d1d1d"/><path d="M2 -1h4M2 1.5h4M2 4h4" stroke="#1d1d1d"/></g>
<g transform="translate(1603,474)"><path d="M-7 -6h14v5h-2v6h-10v-6h-2z" fill="#c0c0c0"/><path d="M-2.5 5L0 1l2.5 4z" fill="#1d1d1d"/></g>
<g transform="translate(1603,501.7)"><rect x="-7" y="-4" width="9" height="10" fill="none" stroke="#a8a8a8"/><rect x="-4" y="-6.5" width="10" height="9" fill="#c0c0c0" stroke="#1d1d1d"/></g>
<g transform="translate(1603,530)"><path d="M-3 -6l-3.5 7a3 3 0 0 0 7 0z" fill="#ccc"/><circle cx="4" cy="-5" r="1.8" fill="#ccc"/><circle cx="3" cy="3" r="3.5" fill="none" stroke="#bbb"/></g>
<g transform="translate(1603,558.3)"><circle r="6.5" fill="#a84c58"/><path d="M-3 -4h4l1 3-4 1-1 4-2-4zM3 2l2 2-3 2z" fill="#1d1d1d"/></g>
<g transform="translate(1603,593.3)"><rect x="-7" y="-6.5" width="14" height="3.2" fill="#d8d8d8"/><path d="M-6 -2h12v8h-12z" fill="none" stroke="#d8d8d8" stroke-width="1.2"/><rect x="-2" y="0" width="4" height="1.5" fill="#d8d8d8"/></g>
<path d="M1594 617h22v26.3h-22q-4 0-4-4V621q0-4 4-4z" fill="#303030"/>
<g transform="translate(1603,630)"><rect x="-4.5" y="-4.5" width="9" height="9" fill="#e88c3a"/><path d="M-7 -4v-3h3M4 -7h3v3M7 4v3h-3M-4 7h-3v-3" fill="none" stroke="#c88a50" stroke-width="1.1"/></g>
<g transform="translate(1603,658.3)"><path d="M-6 7L-7 4 1 -3q-1-4 3-4.5h3L4 -4.5l2 2.5 2-2q1 4-3 6L-2 7z" fill="#4e80c8"/></g>
<g transform="translate(1603,686)"><path d="M-4 -4L6 -4M-4 -4L-1 2M-4 -4L6 6" stroke="#4e80c8" fill="none" stroke-width="1.1"/><circle cx="-4" cy="-4" r="2.3" fill="#4e80c8"/><circle cx="6" cy="-4" r="1.5" fill="#4e80c8"/><circle cx="-1" cy="4" r="1.5" fill="#4e80c8"/><circle cx="6" cy="6" r="1.5" fill="#4e80c8"/></g>
<g transform="translate(1603,714)"><circle r="6.5" fill="none" stroke="#4e70b0" stroke-width="1"/><circle cx="-1" cy="0" r="3" fill="#6088d0"/><circle cx="5" cy="-5" r="1.7" fill="#6088d0"/></g>
<g transform="translate(1603,742.7)" fill="none" stroke="#4e74b8" stroke-width="1.3"><circle cx="-1" cy="1" r="2"/><ellipse cx="-1" cy="1" rx="5.5" ry="5.2"/><path d="M-5 -2L3 -7q4 -1 3 3L2 5"/></g>
<g transform="translate(1603,770)"><path d="M-6 -5H6L0 6z" fill="none" stroke="#1fa87a" stroke-width="1.2"/><rect x="-7.5" y="-6.5" width="3" height="3" fill="#1d1d1d" stroke="#1fa87a"/><rect x="4.5" y="-6.5" width="3" height="3" fill="#1d1d1d" stroke="#1fa87a"/><rect x="-1.5" y="4.5" width="3" height="3" fill="#1d1d1d" stroke="#1fa87a"/></g>
<g transform="translate(1603,798.3)"><circle r="7" fill="#a84c58"/><path d="M0 0V-7A7 7 0 0 1 7 0z" fill="#e8e0e0"/><path d="M0 0V7A7 7 0 0 1 -7 0z" fill="#321c20"/></g>

<!-- properties main -->
<g transform="translate(1634,405.7)"><rect x="-4.5" y="-4.5" width="9" height="9" fill="#e6e6e6"/><path d="M-6.5 -3.5v-3h3M3.5 -6.5h3v3M6.5 3.5v3h-3M-3.5 6.5h-3v-3" fill="none" stroke="#b8b8b8"/></g>
<text x="1650.7" y="410" textLength="28.3">Plane</text>
<rect class="b" x="1624.3" y="432.3" width="200" height="19.4" rx="4"/>
<rect x="1655.7" y="433" width="150" height="18" fill="#1d1d1d"/>
<g transform="translate(1636,442)"><rect x="-4.5" y="-4.5" width="9" height="9" fill="#e6e6e6"/><path d="M-6.5 -3.5v-3h3M3.5 -6.5h3v3M6.5 3.5v3h-3M-3.5 6.5h-3v-3" fill="none" stroke="#b8b8b8"/></g>
<use href="#cd" x="1649" y="442.5"/>
<text x="1663.3" y="446" textLength="28.8">Plane</text>

<rect x="1624.3" y="462.3" width="200" height="280.4" rx="5" fill="#3d3d3d"/>
<path d="M1633.8 473.5l3.5 3.5 3.5-3.5" fill="none" stroke="#c8c8c8" stroke-width="1.1"/>
<text x="1646.7" y="479" textLength="53.6">Transform</text>
<g fill="#545454">
<path d="M1742 496h80v18h-84v-14q0-4 4-4z"/><rect x="1738" y="515.3" width="84" height="18.7"/><path d="M1738 535.3h84v18.7h-80q-4 0-4-4z"/>
<path d="M1742 561h80v18h-84v-14q0-4 4-4z"/><rect x="1738" y="580.3" width="84" height="18.7"/><path d="M1738 600.3h84v18.7h-80q-4 0-4-4z"/>
<path d="M1742 651h80v18h-84v-14q0-4 4-4z"/><rect x="1738" y="670.3" width="84" height="18.7"/><path d="M1738 690.3h84v18.7h-80q-4 0-4-4z"/>
</g>
<rect x="1738" y="626" width="90" height="18" rx="4" fill="#1f1f1f"/>
<g text-anchor="end">
<text x="1727" y="509">Location X</text><text x="1727" y="529">Y</text><text x="1727" y="549">Z</text>
<text x="1727" y="574">Rotation X</text><text x="1727" y="594">Y</text><text x="1727" y="614">Z</text>
<text x="1728" y="639">Mode</text>
<text x="1727" y="664">Scale X</text><text x="1727" y="684">Y</text><text x="1727" y="704">Z</text>
</g>
<text x="1745" y="639" textLength="52">XYZ Euler</text>
<g>
<text class="w" x="1790.7" y="509">0 m</text><text class="w" x="1790.7" y="529">0 m</text><text class="w" x="1790.7" y="549">0 m</text>
<text class="w" x="1790.7" y="574">90°</text><text class="w" x="1788" y="594">-90°</text><text class="w" x="1794" y="614">0°</text>
<text class="w" x="1784.3" y="664">1.000</text><text class="w" x="1784.3" y="684">1.000</text><text class="w" x="1784.3" y="704">1.000</text>
</g>
<use href="#cr" x="1651" y="730.7"/>
<text x="1660.3" y="735" textLength="84">Delta Transform</text>

<g fill="#3d3d3d">
<rect x="1624.3" y="745" width="200" height="25" rx="5"/><rect x="1624.3" y="772" width="200" height="25" rx="5"/><rect x="1624.3" y="799" width="200" height="25" rx="5"/><rect x="1624.3" y="826" width="200" height="25" rx="5"/><rect x="1624.3" y="853" width="200" height="25" rx="5"/><rect x="1624.3" y="880" width="200" height="25" rx="5"/><rect x="1624.3" y="907" width="200" height="25" rx="5"/><rect x="1624.3" y="934" width="200" height="25" rx="5"/><rect x="1624.3" y="961" width="200" height="25" rx="5"/><rect x="1624.3" y="988" width="200" height="25" rx="5"/>
</g>
<use href="#cr" x="1637" y="757.5"/><use href="#cr" x="1637" y="784.5"/><use href="#cr" x="1637" y="811.5"/><use href="#cr" x="1637" y="838.5"/><use href="#cr" x="1637" y="865.5"/><use href="#cr" x="1637" y="892.5"/><use href="#cr" x="1637" y="919.5"/><use href="#cr" x="1637" y="946.5"/><use href="#cr" x="1637" y="973.5"/><use href="#cr" x="1637" y="1000.5"/>
<text x="1646.3" y="762" textLength="48.4">Relations</text>
<text x="1646.3" y="789" textLength="59.4">Collections</text>
<text x="1646.3" y="816" textLength="57">Instancing</text>
<text x="1646.3" y="843" textLength="70.4">Motion Paths</text>
<text x="1646.3" y="870" textLength="43">Shading</text>
<text x="1646.3" y="897" textLength="45.7">Visibility</text>
<text x="1646.3" y="924" textLength="89.7">Viewport Display</text>
<text x="1646.3" y="951" textLength="40.4">Line Art</text>
<text x="1646.3" y="978" textLength="54">Animation</text>
<text x="1646.3" y="1005" textLength="97.7">Custom Properties</text>

<!-- timeline -->
<path d="M2 943q0-6 6-6H1578q6 0 6 6v18H2z" fill="#303030"/>
<rect x="2" y="961" width="1582" height="23" fill="#1d1d1d"/>
<rect x="2" y="984" width="1582" height="18" fill="#262626"/>
<rect x="58.7" y="984" width="1466.5" height="13" fill="#2e2e2e"/>
<rect class="b" x="8.7" y="939.3" width="30.6" height="19.4" rx="4"/>
<circle cx="20" cy="949" r="6.5" fill="#e6e6e6"/><path d="M20 945l2.5 4-3 4.5q-3 -.5 -3 -4z" fill="#282828" opacity=".6"/>
<use href="#cd" x="33.5" y="949.5"/>
<rect class="b" x="46" y="939.3" width="131.6" height="19.4" rx="4"/>
<path d="M116.3 939.5v19" stroke="#1c1c1c"/>
<text x="53" y="952.7" textLength="47">Playback</text><use href="#cd" x="110" y="949.5"/>
<text x="124" y="952.7" textLength="35.7">Keying</text><use href="#cd" x="171" y="949.5"/>
<text x="187" y="952.7" textLength="25.2">View</text>
<text x="228.6" y="952.7" textLength="35.2">Marker</text>
<rect class="b" x="701" y="939.3" width="38" height="19.4" rx="4"/>
<path d="M705 939.3h14.5v19.4H705q-4 0-4-4v-11.4q0-4 4-4z" fill="#545454"/>
<circle cx="710" cy="949" r="4.8" fill="none" stroke="#9a9a9a" stroke-width="1.1"/>
<path d="M725.5 948l3 3 3-3" fill="none" stroke="#6a6a6a"/>
<rect x="745" y="939.3" width="119.6" height="19.4" rx="4" fill="#545454"/>
<path d="M765.5 939.3v19.4M785 939.3v19.4M805 939.3v19.4M825 939.3v19.4M845 939.3v19.4" stroke="#444"/>
<g fill="#eee">
<rect x="751" y="944" width="1.8" height="10"/><path d="M760 944v10l-6-5z"/>
<path d="M771 944l-3.5 5 3.5 5zM776 944.500l-3.500 4.500 3.500 4.500 3.500-4.500zM781 944l0 10 2-5z"/>
<path d="M799 943v12l-8-6z"/>
<path d="M811 943v12l9-6z"/>
<path d="M829 944v10l2.500-5zM834.500 944.500l-3.500 4.500 3.500 4.500 3.500-4.500zM839 944l3.500 5-3.500 5z"/>
<path d="M850.5 944v10l6-5z"/><rect x="857.5" y="944" width="1.8" height="10"/>
</g>
<rect x="1305" y="939.3" width="73" height="19.4" rx="4" fill="#545454"/>
<text x="1338.500" y="953" text-anchor="middle" class="w">1</text>
<rect class="b" x="1385.6" y="939.3" width="18" height="19.4" rx="4"/>
<circle cx="1393.8" cy="950.5" r="5.3" fill="none" stroke="#ddd" stroke-width="1.1"/><path d="M1393.8 947.5v3.5h2.5M1391.5 943.5h4.6" fill="none" stroke="#ddd"/>
<rect x="1403.6" y="939.3" width="175" height="19.4" rx="4" fill="#545454"/>
<path d="M1492.8 939.3v19.4" stroke="#3c3c3c"/>
<text x="1419" y="952.7" textLength="24.6">Start</text>
<text x="1475.4" y="952.7" text-anchor="middle">1</text>
<text x="1508.7" y="952.7" textLength="19.3">End</text>
<text x="1544.6" y="952.7" textLength="20">250</text>

<!-- scrub numbers -->
<g text-anchor="middle">
<text x="111.7" y="976.7" style="fill:#a8a8a8">10</text><text x="170.6" y="976.7" style="fill:#a8a8a8">20</text><text x="229.6" y="976.7" style="fill:#a8a8a8">30</text><text x="288.5" y="976.7" style="fill:#a8a8a8">40</text><text x="347.4" y="976.7" style="fill:#a8a8a8">50</text><text x="406.4" y="976.7" style="fill:#a8a8a8">60</text><text x="465.3" y="976.7" style="fill:#a8a8a8">70</text><text x="524.2" y="976.7" style="fill:#a8a8a8">80</text><text x="583.1" y="976.7" style="fill:#a8a8a8">90</text><text x="642.1" y="976.7" style="fill:#a8a8a8">100</text><text x="701" y="976.7" style="fill:#a8a8a8">110</text><text x="759.9" y="976.7" style="fill:#a8a8a8">120</text><text x="818.9" y="976.7" style="fill:#a8a8a8">130</text><text x="877.8" y="976.7" style="fill:#a8a8a8">140</text><text x="936.7" y="976.7" style="fill:#a8a8a8">150</text><text x="995.7" y="976.7" style="fill:#a8a8a8">160</text><text x="1054.6" y="976.7" style="fill:#a8a8a8">170</text><text x="1113.5" y="976.7" style="fill:#a8a8a8">180</text><text x="1172.4" y="976.7" style="fill:#a8a8a8">190</text><text x="1231.4" y="976.7" style="fill:#a8a8a8">200</text><text x="1290.3" y="976.7" style="fill:#a8a8a8">210</text><text x="1349.2" y="976.7" style="fill:#a8a8a8">220</text><text x="1408.2" y="976.7" style="fill:#a8a8a8">230</text><text x="1467.1" y="976.7" style="fill:#a8a8a8">240</text><text x="1526" y="976.7" style="fill:#a8a8a8">250</text>
</g>
<!-- tracks grid -->
<pattern id="tm" patternUnits="userSpaceOnUse" x="82.25" y="984" width="29.465" height="13"><path d="M0 0V13" stroke="#232323" stroke-width="1"/></pattern>
<pattern id="tj" patternUnits="userSpaceOnUse" x="111.7" y="984" width="58.93" height="13"><path d="M0 0V13" stroke="#161616" stroke-width="1"/></pattern>
<rect x="2" y="984" width="1582" height="13" fill="url(#tm)"/>
<rect x="2" y="984" width="1582" height="13" fill="url(#tj)"/>
<rect x="58" y="981" width="1.5" height="16" fill="#4772b3"/>
<rect x="47" y="964" width="23" height="17" rx="3.5" fill="#4772b3"/>
<text x="58.7" y="977" text-anchor="middle" class="w">1</text>
<rect x="10" y="997" width="1565" height="5" rx="2.5" fill="#555"/>
<path d="M3 981l2.5 3-2.5 3" fill="none" stroke="#777"/>
<path d="M1580 981l-2.5 3 2.5 3" fill="none" stroke="#777"/>
</svg>
</body></html>
